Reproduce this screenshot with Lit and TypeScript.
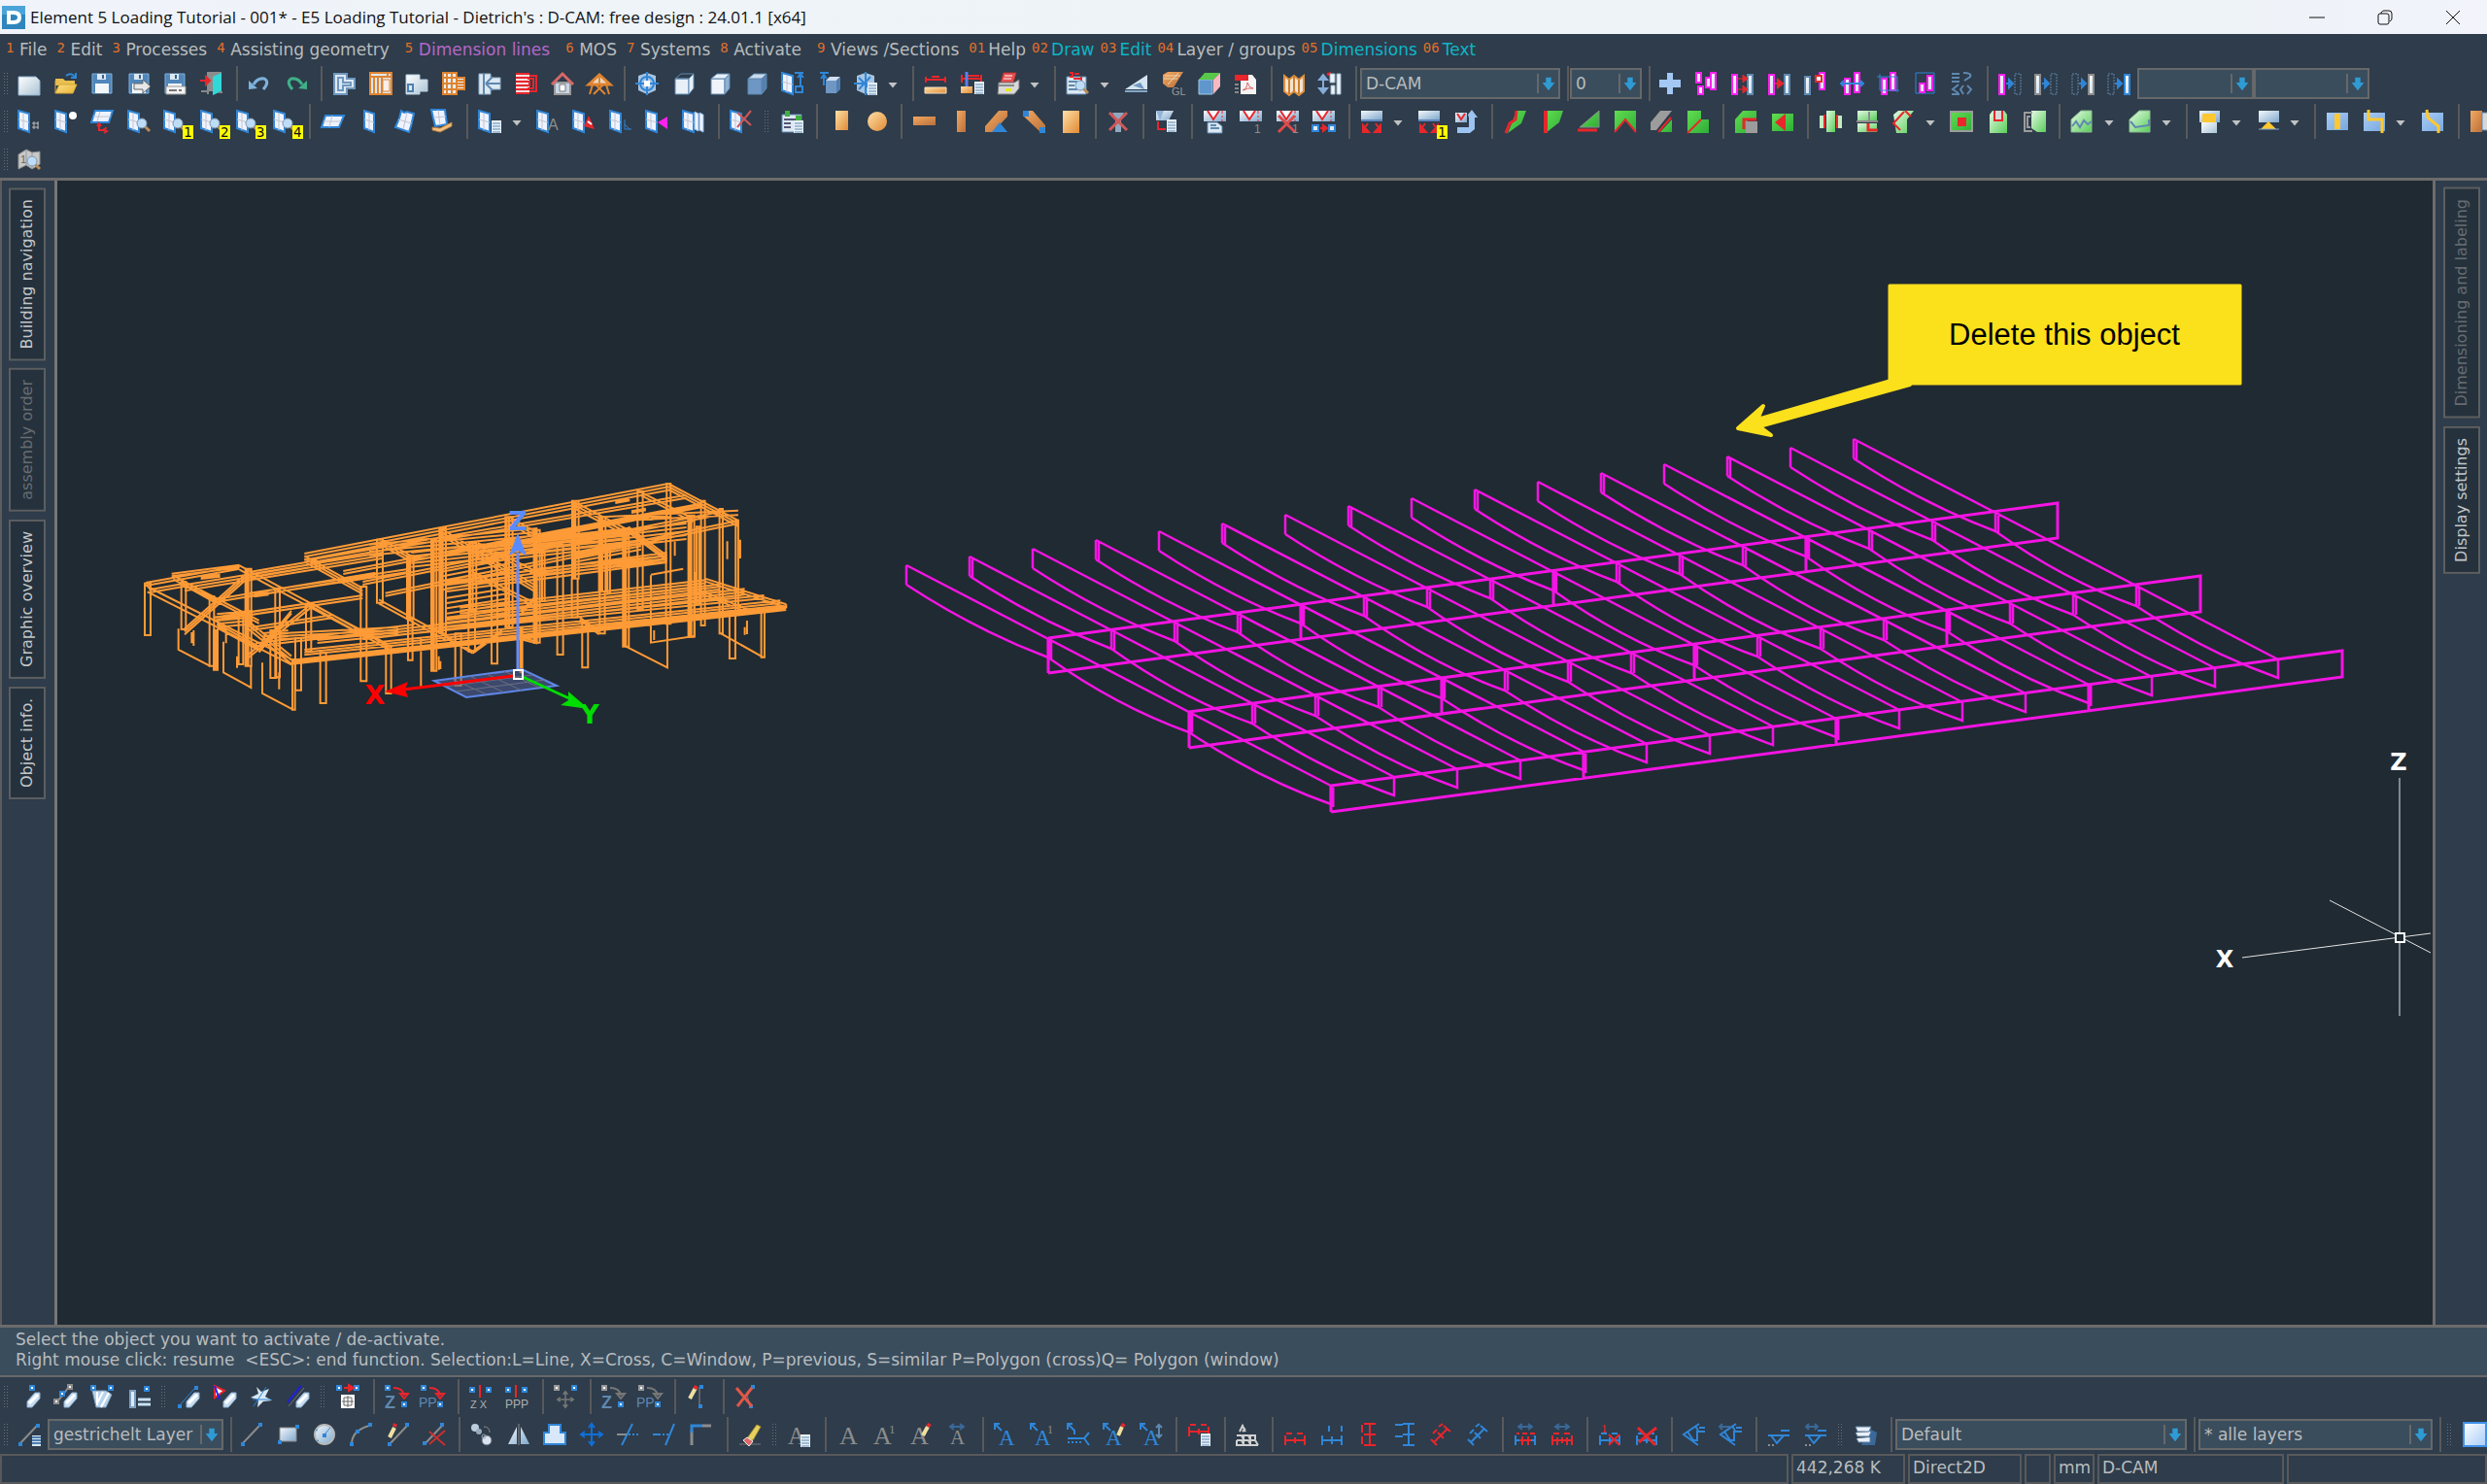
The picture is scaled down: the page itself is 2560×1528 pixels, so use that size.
import { LitElement, html, svg, css, nothing } from "lit";
import { customElement } from "lit/decorators.js";

const B = "#2f86d8", R = "#e8262c", G = "#8c8c8c", O = "#e08430", M = "#ff20f0", W = "#eef3ff", S = "#5f88b0", L = "#dce8f2";
const SHEET = "url(#g-sheet)", ORANGE = "url(#g-orange)", BROWN = "url(#g-brown)", GREEN = "url(#g-green)", MINT = "url(#g-mint)", STEEL = "url(#g-steel)", SKY = "url(#g-sky)";

const p = (d: string, fill = "none", stroke = "none", w = 2) =>
  svg`<path d=${d} fill=${fill} stroke=${stroke} stroke-width=${w}></path>`;
const t = (s: string, x: number, y: number, size: number, fill: string, family = "Liberation Serif", weight = 400) =>
  svg`<text x=${x} y=${y} font-size=${size} fill=${fill} font-family=${family} font-weight=${weight}>${s}</text>`;
const box = (x: number, y: number, w: number, h: number, fill: string, stroke = "none", sw = 2) =>
  p(`M${x} ${y}h${w}v${h}h${-w}z`, fill, stroke, sw);

/* shared motifs */
const sheet = () => [p("M1 1l11 3v19l-11-4z", W, B, 2), p("M6 3v18M1 10l11 3", "none", "#c4c4cc", 1)];
const badge = (n: string) => [box(20, 16, 11, 14, "#ffff00"), t(n, 21, 28, 14, "#111", "DejaVu Sans Mono")];
const lens = () => [p("M18 17l5 5", "none", "#b98c5a", 3), svg`<circle cx="15" cy="14" r="5" fill="#bcdcf8" stroke="#7f97ab"></circle>`];
const list = (x = 14, y = 11) => [box(x, y, 10, 13, "#e6f0f8"), p(`M${x + 1} ${y + 3}h8M${x + 1} ${y + 6}h8M${x + 1} ${y + 9}h8M${x + 1} ${y + 12}h8`, "none", S, 1)];
const disk = () => [p("M2 2h20v20h-20z", "#4f86bb", "#7fb0dc", 1), box(7, 2, 9, 6, L), box(12, 3, 2, 4, "#35618c"), box(5, 12, 14, 10, "#f2f6fa")];
const cube = (front: string, top: string, side: string) => [p("M3 7h14v16h-14z", front, S, 1), p("M3 7l6-5h13l-5 5z", top, S, 1), p("M17 7l5-5v15l-5 6z", side, S, 1)];
const dot = (x: number, y: number, c = B) => box(x - 2, y - 2, 4, 4, "#fff", c, 2);
const node = (x: number, y: number) => box(x - 2, y - 2, 4, 4, B);
const pen = () => [p("M10 23v-6l8-9h5v6l-8 9z", "#c8def2", "#8fafce", 1), p("M12 19l9-9", "none", "#fff", 3)];
const bar = (x: number, y: number, h: number, c: string) => box(x + 1, y + 1, 5, h - 2, "url(#g-bar)", c, 2);
const dashed = (x: number) => svg`<rect x=${x} y="2" width="6" height="21" fill="none" stroke="#5f88b0" stroke-width="1" stroke-dasharray="2 1"></rect>`;
const arrow = (x: number) => p(`M${x} 12h6m-3-4l4 4-4 4z`, B, B, 2);
const vee = (c = R) => [p("M1 1h23v11h-23z", STEEL), p("M5 1l6 9 6-9", "#fff", c, 2), p("M20 1v3M20 6v2M20 10v2", "none", c, 1)];
const cross = (x = 6, y = 6, s = 16, c = "#e04a48") => p(`M${x} ${y}l${s} ${s}M${x + s} ${y}l${-s} ${s}`, "none", c, 3);
const hdim = (c: string, top = 12) => p(`M1 ${top + 6}h22M2 ${top + 1}v10M22 ${top + 1}v10M12 ${top + 3}v6M3 ${top - 1}h6M14 ${top - 1}h6`, "none", c, 2);
const four = (c: string) => p("M12 2v20M2 12h20M9 5l3-4 3 4M9 19l3 4 3-4M5 9l-4 3 4 3M19 9l4 3-4 3", "none", c, 2);
const ruler = (c: string) => p("M17 1L1 12l15 11M13 3l3 5M5 9l6 9h4V8M14 9h9M17 5h6", "none", c, 2);

const ICONS: Record<string, unknown> = {
  "new": p("M1 5h18l4 4v15h-22z", SHEET, "#8fb0cc", 1),
  open: [p("M1 7h8l2 2h10v5h-20z", "#e8bf50"), p("M1 22V9M5 13h18l-4 9h-18z", "url(#g-gold)", "#d6a63a", 1), p("M12 4q5-4 9 1m1-4v5h-5", "none", B, 2)],
  save: disk(),
  saveas: [disk(), p("M7 12h9v-4l8 7-8 7v-4h-9z", "#e8e8e8", "#666", 1)],
  saveprint: [disk(), box(3, 15, 20, 8, "#f4f4f4", "#999", 1), p("M6 19h8M16 19h3", "none", "#777", 2)],
  exit: [box(7, 0, 15, 20, "#8c8c8c"), p("M13 5l9-4v19l-9 4z", "#30d8d8"), p("M0 9h9M6 5l4 4-4 4z", R, R, 2), p("M1 20h7v3M19 21h4", "none", "#888", 2)],
  undo: [p("M6 13q4-7 11-6q6 3-1 11", "none", "#7fb2dc", 3), p("M1 18v-9l9 8z", "#7fb2dc")],
  redo: [p("M18 13q-4-7-11-6q-6 3 1 11", "none", "#3fb088", 3), p("M23 18v-9l-9 8z", "#3fb088")],
  plan: [p("M2 2h13v5h8v10h-8v6h-13z", L, "#6f97bf", 2), p("M6 6h5v5h8v3h-8v5h-5z", "none", "#6f97bf", 2)],
  wall: [box(1, 1, 22, 22, L, O, 2), p("M1 5h22M5 5v18M9 5v18M13 5v18M19 1v4", "none", O, 2), box(14, 8, 7, 12, "#f8f0e8", O, 1)],
  floor: [p("M1 3h14v5h8v12h-8v3h-14z", SHEET, "#b8cfe0", 1), box(3, 13, 5, 7, L, "#4f7fb0", 2)],
  rafter: [p("M1 1h14v22h-14zM15 6h8v12h-8z", "#e8eef4", O, 2), p("M1 6h14M1 12h22M1 18h14M5 1v22M10 1v22M15 9h8M15 15h8", "none", O, 2)],
  slab: [p("M1 2h12v4h10v12h-10v5h-12z", L, "#8fb0cc", 1), p("M6 2v21M8 12h15M8 12l7-7M8 12l7 7", "none", "#5f88b0", 2)],
  brick: [box(1, 1, 14, 22, "#f2dede"), p("M1 2h14M1 6h14M1 10h10M1 14h10M1 18h14M1 22h14M15 4h7v16h-7M13 7h6v10h-6M10 10h5v4h-5", "none", R, 2)],
  house: [p("M4 11h16v12h-16z", "#c8d8e8", "#999", 2), box(9, 13, 6, 7, "#fff", "#777", 1), p("M1 13L12 2l11 11", "none", "#d86868", 3)],
  truss: [p("M1 13L12 3l11 10z", "#e8d8c8", O, 3), p("M12 4v9M5 13l-3 10M19 13l3 10M8 13l10 10M16 13L6 23", "none", O, 2)],
  target: [p("M3 4l9-3 9 3v15l-9 4-9-4z", "#a8c4e0"), svg`<circle cx="12" cy="12" r="7" fill="none" stroke="#2f86d8" stroke-width="2"></circle>`, p("M12 0v24M0 12h24", "none", B, 2), box(9, 9, 6, 6, "#fff")],
  cubea: cube("#e8f0f8", "none", "#e8f0f8"),
  cubeb: cube("#f0f4fa", "#e8f0f8", "#8fb0d4"),
  cubec: cube("#6f97c4", "#c8daec", "#5580b0"),
  sheetup: [sheet(), p("M20 14V3M17 6l3-4 3 4M14 1h9M15 15h7v6h-7z", "none", B, 2)],
  cubeup: [p("M2 1h9M6 14V4M3 7l3-4 3 4", "none", B, 2), box(8, 9, 11, 13, "#6f97c4"), p("M8 9l4-4h11l-4 4z", "#d0e0f0"), p("M19 9l4-4v13l-4 4z", "#4f7fb0")],
  targetdoc: [p("M3 4l9-3 9 3v15l-9 4-9-4z", "#a8c4e0"), p("M12 0v24M0 12h18M5 6l12 12M17 5L5 18", "none", B, 2), list()],
  dim: [p("M1 8h22M2 5v6M22 5v6M8 5h8", "none", R, 2), box(1, 16, 22, 6, ORANGE, "#f4dfc0", 1)],
  dimcross: [p("M1 7h22M2 3v8M22 3v8M8 4h12", "none", R, 2), p("M7 0v22", "none", "#5f80e8", 3), box(1, 15, 12, 7, ORANGE), list(15, 10)],
  printer: [p("M7 1h13l-3 10h-13z", "#e85050", "#b83030", 1), p("M8 4h8M7 7h8", "none", "#fff", 1), p("M2 11h16l5-3v9l-5 6h-17z", "#d8d8d8", "#777", 1), box(9, 17, 6, 3, "#e8e820"), p("M2 14h16", "none", "#888", 2)],
  inspect: [box(1, 5, 20, 18, L, S, 1), p("M4 1h3v4h-3M9 2h5M8 7h8M16 5v4", "none", R, 2), p("M3 10h9M3 14h6M3 18h9", "none", S, 2), lens()],
  tri: [p("M0 18L23 3v15z", "#d4e4f0"), p("M8 14l8-3 4 7z", "#6f97bf"), p("M0 20h23", "none", "#86a8c8", 2)],
  gl: [p("M2 3l5-3h16l-10 16h-6l-5-4z", BROWN), p("M4 4h16M3 7h14M7 13L18 1", "none", "#f0d8b0", 1), t("GL", 11, 24, 11, "#9a9a9a", "Liberation Sans")],
  cubecolor: [p("M1 8h14v15h-14z", "#5f97cc", "#a0c8e8", 1), p("M1 8l6-7h16l-7 7z", "#58c848"), p("M16 8l7-7v14l-7 8z", "#f8b8c0")],
  pdf: [p("M7 3h12l4 5v15h-16z", "#f4f4f4"), box(1, 3, 14, 6, R), p("M9 19q5-2 5-8q2 6 6 6q-6-1-10 2", "none", "#e06060", 1), p("M1 13h4M1 17h4M1 21h4", "none", "#888", 2)],
  map: [p("M2 4l5 4 5-4 5 4 5-4v16l-5 4-5-4-5 4-5-4z", "#f2e4d0", "#e09040", 2), p("M7 8v15M12 4v16M17 8v15", "none", "#d08030", 2)],
  updown: [p("M5 5v15M1 8l4-5 4 5zM1 17l4 5 4-5z", "#86acd8", "#86acd8", 2), p("M9 3l4-2", "none", R, 3), p("M12 2h5v9h-5zM19 2h4v21h-4zM13 14h4v9h-4z", "#eef4fa", "#9fb4c8", 1)],
  plus: p("M9 1h6v7h8v8h-8v7h-6v-7h-8v-8h8z", "#a4c8f4"),
  p1: [bar(0, 0, 12, M), bar(15, 0, 19, M), bar(10, 5, 12, M), bar(2, 14, 10, M)],
  p2: [bar(0, 2, 22, M), bar(16, 2, 22, S), p("M7 7h5M12 3l5 4-5 4zM7 18h5M12 14l5 4-5 4z", R, R, 1)],
  p3: [bar(0, 2, 22, M), bar(16, 2, 22, S), p("M7 12h5M10 8l5 4-5 4z", R, R, 2)],
  p4: [bar(0, 4, 20, S), bar(15, 0, 19, M), box(12, 4, 6, 6, "#fff", R, 2)],
  p5: [bar(3, 6, 18, M), bar(13, 0, 22, M), p("M0 12h23M3 9l-3 3 3 3M20 9l3 3-3 3", "none", B, 2)],
  p6: [bar(4, 6, 18, M), bar(13, 0, 20, M), p("M3 2v17h20M0 5h21v16", "none", B, 1)],
  p7: [box(2, 1, 19, 21, "none", B, 1), bar(5, 11, 11, M), bar(13, 3, 17, M)],
  sym: p("M2 2h8M2 6h8M2 10h8M14 1q9 0 7 4l-6 4M9 13l-6 5 6 4M14 14l-3 4 3 5M18 14l4 4-4 5M2 23h8", "none", S, 2),
  m1: [bar(0, 2, 22, M), arrow(8), dashed(17)],
  m2: [bar(0, 2, 22, G), arrow(8), dashed(17)],
  m3: [dashed(1), arrow(8), bar(17, 2, 22, G)],
  m4: [dashed(1), arrow(8), bar(17, 2, 22, B)],

  sheetdots: [sheet(), p("M15 14h7M15 18h7M17 12v8M21 12v8", "none", "#b8b8b8", 1)],
  sheetball: [sheet(), svg`<circle cx="19" cy="6" r="4" fill="#fff"></circle>`],
  sheetred: [p("M5 1h18l-4 12h-18z", W, B, 2), p("M10 2l-3 10M3 7h18", "none", "#c4c4cc", 1), p("M9 15v6h7M16 18l-1 4M7 17l2-3 2 3M13 20l4 2-3 2", "none", R, 2)],
  sheetlens: [sheet(), lens()],
  s1: [sheet(), lens(), badge("1")],
  s2: [sheet(), lens(), badge("2")],
  s3: [sheet(), lens(), badge("3")],
  s4: [sheet(), lens(), badge("4")],
  panel1: [p("M5 6h19l-5 12h-18z", W, B, 2), p("M12 6l-3 12M3 12h18", "none", "#c4c4cc", 1)],
  panel2: [p("M7 1l10 3v19l-10-4z", W, B, 2), p("M12 3v18M7 10l10 3", "none", "#c4c4cc", 1)],
  panel3: [p("M8 1l3 2 3-1 7 2-3 13-2 6-14-5 4-9z", W, B, 2), p("M14 3l-4 17M5 10l14 4", "none", "#c4c4cc", 1)],
  panel4: [p("M1 0h14l2 15-12 2z", W, B, 2), p("M8 0l2 16M3 8l13-1", "none", "#c4c4cc", 1), p("M2 18l8 1 12-6v4l-12 6-8-2z", "#f0c080", "#b87838", 1)],
  sheetlist: [sheet(), list()],
  sheeta: [sheet(), t("A", 12, 21, 16, "#8c8c8c", "Liberation Sans")],
  sheetwarn: [sheet(), p("M17 6l-5 11 11 3z", R), p("M16 12l4 3", "none", "#fff", 2)],
  sheetaxis: [sheet(), p("M16 10v10h7M16 15l5 5", "none", B, 1)],
  sheetmag: [sheet(), p("M23 7v13l-10-7z", M)],
  sheetcopy: [sheet(), p("M13 2l4 2v18l-4-2zM18 3l4 2v18l-4-2z", W, "#8fb8e8", 1)],
  sheetdel: [sheet(), p("M8 3l14 13M22 1L8 18", "none", "#d05858", 2)],
  report: [box(2, 5, 20, 18, L, S, 1), box(5, 1, 5, 6, "#40b040"), box(16, 6, 6, 5, "#40b040"), p("M4 10h12M4 14h7M4 18h7", "none", "#557", 2), list()],
  obox: box(8, 1, 13, 20, ORANGE), ocircle: svg`<ellipse cx="13" cy="12" rx="10" ry="10" fill="url(#g-orange)"></ellipse>`,
  ohoriz: box(1, 7, 23, 9, BROWN), overt: box(8, 1, 9, 22, BROWN),
  odiag: [p("M14 1h9v6L8 23h-8v-6z", BROWN), p("M15 13l8 10h-16z", B)],
  odiag2: [p("M5 1h6l13 15v7h-5L1 6z", BROWN), box(1, 1, 6, 6, B), box(18, 18, 6, 6, B)],
  obox2: box(5, 1, 17, 23, ORANGE),
  screwdel: [p("M6 3h12l-3 6v14h-6v-14z", "#8fa8c0"), cross(3, 3, 18, "#d05858")],
  veetree: [p("M2 1h18l-5 10h-13z", STEEL), p("M2 1h8l-4 10", "#8fb4d8"), p("M4 12v8h8", "none", R, 2), list(13, 10)],
  v1: [vee(), p("M5 13h10l5 4v7h-15z", L, S, 1), p("M8 16h6M8 19h9", "none", S, 2)],
  v2: [vee(), t("1", 16, 24, 12, "#8c8c8c", "Liberation Sans")],
  v3: [vee(), cross(3, 6, 17), t("1", 17, 24, 12, "#8c8c8c", "Liberation Sans")],
  v4: [vee(), box(1, 16, 6, 6, L, B, 2), box(18, 16, 6, 6, L, B, 2), p("M9 19h4M12 16l4 3-4 3z", R, R, 2)],
  w1: [box(1, 1, 22, 9, STEEL), p("M1 11h22", "none", "#5f88c0", 2), p("M8 14l-4 6M3 16v7h6zM16 14l4 6M21 16v7h-6z", R, R, 2)],
  w2: [box(1, 1, 22, 9, STEEL), p("M1 11h22", "none", "#5f88c0", 2), p("M8 14l-4 6M3 16v7h6zM16 14l4 6M21 16v7h-6z", R, R, 2), badge("1")],
  w3: [box(1, 3, 12, 10, STEEL), p("M3 4l4 6 4-6", "none", R, 2), p("M14 5l4-5 6 8h-3v12l-5 4h-13v-6h12v-10z", "#9cc4f0")],
  g1: [p("M13 1h10l-5 13-14 10 5-12z", GREEN), p("M13 1l-1 9-6 4-4 10", "none", R, 3)],
  g2: [p("M7 1h16l-4 12-14 11z", GREEN), p("M5 1v23", "none", R, 4)],
  g3: [p("M23 1v17h-20z", GREEN, "#8c8c8c", 1), p("M1 21h20", "none", R, 3)],
  g4: [p("M1 1h22v22l-11-12-11 12z", GREEN), p("M1 23l11-13 11 13", "none", R, 2)],
  g5: [p("M11 1h12l-16 20h-6v-8z", "#9c9c9c"), p("M23 10v13h-12z", GREEN), p("M22 8l-13 15", "none", R, 2)],
  g6: [p("M1 1h14v9h8v14h-22z", GREEN), p("M15 10l-14 14", "none", R, 2)],
  g7: [p("M9 1h14v8h-9v15h-13v-14z", GREEN), p("M10 20v-10h13", "none", R, 3), box(12, 12, 12, 12, "#9c9c9c")],
  g8: [box(1, 4, 22, 18, GREEN), p("M15 4v18l-11-9z", R)],
  h1: [box(8, 1, 9, 22, MINT), p("M1 6h5v13h-5zM19 6h5v13h-5z", "#c4ecc4"), p("M6 5v14M19 5v14", "none", R, 2)],
  h2: [box(2, 1, 20, 10, MINT), box(2, 14, 20, 9, MINT), p("M13 14v7h10", "none", R, 3), p("M1 12h22M14 2v9", "none", "#8c8c8c", 2)],
  h3: [p("M2 5l5-4h16l-7 9v14h-11z", MINT), p("M14 1l6 6M13 2l-11 12 7 7", "none", R, 2)],
  h4: [box(1, 2, 22, 20, GREEN, "#9c9c9c", 2), box(8, 8, 9, 9, R)],
  h5: [p("M4 5l3-4h12l3 4v19h-18z", MINT), p("M9 1v10h8v-10", "#d8d8d8", R, 2)],
  h6: [p("M9 1h15v22h-9l-6-4z", MINT), p("M10 3h-8v19h8M8 7h-3v11h3", "none", "#9c9c9c", 2)],
  k1: [p("M1 10l10-9h11v22h-21z", MINT, "#88b890", 1), p("M2 17l4-5 4 6 4-7 4 4 4-3", "none", S, 2)],
  k2: [p("M1 10l10-9h11v22h-21z", MINT, "#88b890", 1), p("M2 12l5 6 14-2v-6", "none", S, 2)],
  y1: [box(4, 12, 16, 12, SHEET), box(2, 1, 21, 12, STEEL), box(5, 4, 14, 9, "#ffc830")],
  y2: [box(2, 1, 21, 12, STEEL), p("M12 12l8 8h-16z", "#ffc830"), p("M2 20h21", "none", "#7fa8d8", 1)],
  y3: [p("M1 3h22v18h-22z", SKY), box(9, 4, 6, 16, "#ffc830")],
  y4: [box(1, 3, 22, 19, SKY), p("M6 0v10h14v14", "none", "#ffc830", 3)],
  y5: [box(1, 3, 22, 19, SKY), p("M6 0l1 8 11 9v7", "none", "#ffc830", 3)],
  y6: [box(1, 1, 12, 22, BROWN), box(13, 3, 10, 18, "#d8d8d8", S, 1)],
  book: [p("M1 7l8-5 6 3 8-1v13l-8 5-6-4-8 4z", "#c8c8c8", "#8f8f8f", 1), p("M9 2v16M15 5v16", "none", "#999", 1), t("1", 3, 16, 11, "#666", "Liberation Sans"), lens()],

  q1: [pen(), dot(15, 3)], q2: [pen(), p("M3 17l6-7 5-7", "none", G, 2), dot(8, 9), dot(16, 2, G), dot(2, 17, G)],
  q3: [p("M2 6h14l6 4-6 13h-10z", "#b8d4ec", "#7f9fbe", 1), p("M7 7v14M13 7l-6 12M19 8l-8 15", "none", "#fff", 2), dot(3, 3), dot(21, 3)],
  q4: [p("M3 6h5v17h-5z", "#dcebfa", "#7f9fbe", 2), p("M11 15h13M11 20h13", "none", "#c8e0f4", 3), dot(20, 4)],
  q5: [p("M2 22L18 4", "none", B, 1), node(20, 3), node(3, 22), pen()],
  q6: [p("M1 1v12l10-7z", "#fff", R, 2), p("M1 1l5 14", "none", "#2020ff", 2), pen()],
  q7: [p("M7 2l5 5 8-3-4 8 7 4-9 1-6 6 1-8-8-2 8-4z", "#d8e8f4"), p("M4 22L17 2M3 15h19", "none", B, 1)],
  q8: [p("M1 18L15 1", "none", "#2020d8", 2), p("M2 22L18 3", "none", "#777", 1), pen()],
  q9: [dot(3, 3), dot(21, 3), p("M8 3h6M13 0l5 3-5 3z", R, R, 2), box(5, 10, 14, 14, "#fff"), p("M8 13h8v8h-8zM12 11v12M6 17h12", "none", "#666", 1)],
  z1: [dot(3, 3), dot(20, 20), p("M9 3q10 0 11 8M16 9l4 5 4-5z", "none", R, 2), t("Z", 0, 24, 18, S, "Liberation Sans", 700)],
  z2: [dot(3, 3), dot(20, 20), p("M9 3q10 0 11 8M16 9l4 5 4-5z", "none", R, 2), t("PP", -2, 23, 14, S, "Liberation Sans")],
  z3: [dot(3, 5), dot(20, 5), p("M11 0v13", "none", R, 2), t("Z X", 1, 24, 11, "#b0b0b0", "Liberation Sans")],
  z4: [dot(3, 5), dot(20, 5), p("M11 0v13", "none", R, 2), t("PPP", 0, 24, 12, "#b0b0b0", "Liberation Sans")],
  z5: [dot(3, 3, "#999"), dot(21, 3), svg`<g transform="translate(3 6) scale(.75)">${four("#777")}</g>`],
  z6: [dot(3, 3, "#999"), dot(20, 20), p("M9 3q10 0 11 8M16 9l4 5 4-5z", "none", "#777", 2), t("Z", 0, 24, 18, S, "Liberation Sans", 700)],
  z7: [dot(3, 3, "#999"), dot(20, 20), p("M9 3q10 0 11 8M16 9l4 5 4-5z", "none", "#777", 2), t("PP", -2, 23, 14, S, "Liberation Sans")],
  z8: [p("M14 2v19", "none", G, 1), node(16, 2), node(15, 22), p("M4 14L10 3", "none", "#f0e0a0", 4), p("M9 4l2-3", "none", R, 4)],
  z9: [p("M18 4q-9 6 0 18", "none", "#777", 1), node(17, 22), node(19, 2), p("M2 3l16 19M18 3L3 22", "none", "#e05848", 3)],

  ln0: [p("M2 22L20 3", "none", G, 2), node(3, 22), node(21, 3), box(15, 13, 9, 11, "#d8e8f4"), p("M15 15h9M15 18h9M15 21h9", "none", "#4f7fb0", 2)],
  ln1: [p("M2 22L20 3", "none", G, 2), node(3, 22), node(21, 2)],
  ln2: [box(3, 5, 17, 14, STEEL, G, 1), node(21, 4), node(3, 20)],
  ln3: [svg`<circle cx="12" cy="12" r="10" fill="url(#g-steel)" stroke="#b8b8b8" stroke-width="2"></circle>`, p("M12 12l6-7M5 8l-2-1M6 18l-2 1", "none", B, 1), node(12, 13)],
  ln4: [p("M2 22q0-14 18-19", "none", G, 2), node(2, 22), node(8, 9), node(21, 2)],
  ln5: [p("M4 22L22 3", "none", G, 2), node(4, 22), node(22, 2), p("M4 15L9 5", "none", "#f0e0a0", 4), p("M9 4l1-3", "none", R, 4)],
  ln6: [p("M2 22L20 3", "none", G, 2), node(2, 21), node(20, 2), p("M7 9l16 14M23 8L7 22", "none", "#c83030", 2)],
  e1: [svg`<circle cx="5" cy="5" r="4" fill="#bcd"></circle>`, svg`<circle cx="9" cy="9" r="3" fill="#9ab"></circle>`, svg`<circle cx="17" cy="18" r="5" fill="#d8e4f0" stroke="#667"></circle>`, svg`<circle cx="14" cy="14" r="2" fill="none" stroke="#9ab"></circle>`, p("M14 4q6 0 6 6", "none", G, 1)],
  e2: [p("M10 4v18h-9zM14 4v18h9z", STEEL), p("M12 1v22", "none", G, 1)],
  e3: p("M6 2h12v8h5v12h-22v-12h5z", "#d8e8f8", B, 2),
  e4: four("#0f6fd8"),
  e5: [p("M17 1L6 23", "none", B, 2), p("M1 12h10", "none", G, 2), p("M13 12h2M17 12h2M21 12h2", "none", B, 2)],
  e6: [p("M22 1L13 23", "none", B, 2), p("M0 12h8M10 12h2M14 12h2", "none", B, 2)],
  e7: [p("M3 23V8", "none", G, 3), p("M3 10V3h11", "none", B, 3), p("M14 3h9", "none", G, 3)],
  e8: [p("M1 22h22", "none", "#777", 1), p("M9 16L19 2l4 2-8 14z", "#e8d060", "#a89030", 1), p("M5 18l4-3 6 4-4 5z", "#e06868", "#eee", 1)],
  a0: [t("A", 0, 22, 25, G), list(13, 12)],
  a1: t("A", 3, 22, 26, G), a2: [t("A", 1, 22, 26, G), t("1", 17, 11, 13, G)],
  a3: [t("A", 1, 22, 26, G), p("M14 13l5-9", "none", "#f0e0a0", 4), p("M19 4l2-3", "none", R, 4)],
  a4: [t("A", 5, 22, 21, G), p("M6 4h12M9 1l-4 3 4 3M15 1l4 3-4 3", "none", "#3a6898", 2)],
  b1: [t("A", 5, 23, 23, B), p("M1 7V1h5M1 1l7 7", "none", B, 2)],
  b2: [t("A", 5, 23, 23, B), p("M1 7V1h5M1 1l7 7", "none", B, 2), t("1", 18, 11, 12, G)],
  b3: [p("M1 7V1h5M1 1l7 7v4M1 16h18M18 16l5-6M18 16l5 7", "none", B, 2), p("M1 20h2M5 20h2M9 20h2M13 20h2", "none", B, 2)],
  b4: [t("A", 3, 23, 23, B), p("M1 7V1h5M1 1l7 7", "none", B, 2), p("M16 13l4-9", "none", "#f0e0a0", 4), p("M20 4l2-3", "none", R, 4)],
  b5: [t("A", 4, 23, 23, B), p("M1 7V1h5M1 1l7 7", "none", B, 2), p("M20 3v11M17 5l3-3 3 3M17 12l3 3 3-3", "none", S, 2)],
  c1: [hdim(R, 3), list()],
  c2: p("M4 9l3-6 3 6M7 9l3-3M1 13h5l2 4v-4h5l2 4v-4h5v4M1 18h5l2 4v-4h5l2 4v-4h5l3 5M1 18v5h22", "none", "#d0d0d0", 2),
  d1: hdim(R, 12), d2: [p("M1 18h22M2 13v10M22 13v10M12 14v8M9 3v6M22 3v6", "none", B, 2)],
  d3: p("M8 1h12M8 12h12M8 23h12M14 1v22M6 2v8M6 14v8", "none", R, 2),
  d4: p("M10 1h12M10 12h12M10 23h12M16 1v22M2 2h8M2 14h8", "none", B, 2),
  d5: p("M5 20L19 6M2 17l6 6M9 10l6 6M15 3l7 6M4 11l4-4M10 4l4-3", "none", R, 2),
  d6: p("M5 20L19 6M2 17l6 6M9 10l6 6M15 3l7 6M4 11l4-4M10 4l4-3", "none", B, 2),
  f1: [p("M1 18h22M2 13v10M22 13v10", "none", B, 2), p("M9 14v9M15 14v9M6 18h12M3 11h3M9 11h5M17 11h5", "none", R, 2), p("M6 4h12M9 1l-4 3 4 3M15 1l4 3-4 3", "none", "#3a6898", 2)],
  f2: [hdim(R, 12), p("M7 15v8M17 15v8", "none", R, 2), p("M6 4h12M9 1l-4 3 4 3M15 1l4 3-4 3", "none", "#3a6898", 2)],
  f3: [hdim(B, 12), t("1", 3, 10, 13, R), p("M11 12l11 11M22 12L11 23", "none", R, 2)],
  f4: [hdim(B, 12), p("M3 5l18 18M22 5L4 20", "none", R, 3)],
  r1: ruler(B), r2: [ruler(B), p("M0 4h12M3 1L0 4l3 3", "none", "#3a6898", 2)],
  u1: [p("M1 13h22M14 8h9M4 13l6 8 7-8", "none", B, 2), p("M1 23h2M5 23h2", "none", G, 2)],
  u2: [p("M1 13h22M14 8h9M4 13l6 8 7-8", "none", B, 2), p("M2 4h12M5 1L2 4l3 3M11 1l3 3-3 3", "none", "#3a6898", 2), p("M1 23h2M5 23h2", "none", G, 2)],
  layers: [p("M16 6l8 4-2 13h-14z", "#3a6898"), p("M2 4h16l-2 5h-12zM2 10l2 4h12l2-5M3 16l2 4h12v-5", "#e8f0f8", "#5f7f9f", 1)],
  swatch: box(1, 0, 23, 24, "url(#g-swatch)", "#3f90e8", 2),
};

type Item = string | { combo: string; w: number; label: string; space?: number };
const words = (s: string): Item[] => s.split(" ");

/* Tokens: "|" separator, "/" tight separator, ":" grip, "v" drop-down marker, "_" thin spacer; anything else names an icon. */
const ROW1: Item[] = [...words("^ new open save saveas saveprint exit | undo redo | plan wall floor rafter slab brick house truss | target cubea cubeb cubec sheetup cubeup targetdoc v | dim dimcross printer v | inspect v _ tri gl cubecolor pdf | map updown |"),
  { combo: "D-CAM", w: 206, label: "Work mode" }, "/", { combo: "0", w: 74, label: "Level" }, "/",
  ...words("plus p1 p2 p3 p4 p5 p6 p7 sym | m1 m2 m3 m4"),
  { combo: "", w: 120, label: "Filter group" }, { combo: "", w: 119, label: "Filter value" }];
const ROW2 = words("^ sheetdots sheetball sheetred sheetlens s1 s2 s3 s4 | panel1 panel2 panel3 panel4 | sheetlist v sheeta sheetwarn sheetaxis sheetmag sheetcopy | sheetdel : report | obox ocircle | ohoriz overt odiag odiag2 obox2 | screwdel | veetree | v1 v2 v3 v4 | w1 v w2 w3 _ | _ g1 g2 g3 g4 g5 g6 | g7 g8 | h1 h2 h3 v h4 h5 h6 | k1 v k2 v | y1 v _ y2 v | y3 y4 v _ y5 | y6");
const ROW3 = words("^ book");
const ROWA = words("^ q1 q2 q3 q4 : q5 q6 q7 q8 : q9 | z1 z2 | z3 z4 | z5 | z6 z7 | z8 | z9");
const ROWB: Item[] = ["^", "ln0", { combo: "gestrichelt Layer", w: 181, label: "Line layer", space: 1 }, "/",
  ...words("ln1 ln2 ln3 ln4 ln5 ln6 | e1 e2 e3 e4 e5 e6 e7 _ | e8 : a0 | a1 a2 a3 a4 | b1 b2 b3 b4 b5 | c1 | c2 | d1 d2 d3 d4 d5 d6 | f1 f2 | f3 f4 | r1 r2 | u1 u2 : layers |"),
  { combo: "Default", w: 300, label: "Layer set" }, "|", { combo: "* alle layers", w: 241, label: "Visible layers" }, "/", ":", "swatch"];

const UNITS: Record<string, number> = { "^": 11, "|": 12, "/": 10, ":": 14, v: 22, _: 1 };

const MENU: [string, string, string?, boolean?][] = [
  ["1", "File"], ["2", "Edit"], ["3", "Processes"], ["4", "Assisting geometry"], ["5", "Dimension lines", "violet", true],
  ["6", "MOS", "", true], ["7", "Systems"], ["8", "Activate"], ["9", "Views /Sections", "", true], ["01", "Help"], ["02", "Draw", "cyan"],
  ["03", "Edit", "cyan"], ["04", "Layer / groups"], ["05", "Dimensions", "cyan"], ["06", "Text", "cyan"],
];

/* ---- timber frame (grid units, three per pixel) ---- */
const run = (x1: number, y1: number, x2: number, y2: number, n = 2, gap = 9) =>
  Array.from({ length: n }, (_, i) => `M${x1} ${y1 + i * gap}L${x2} ${y2 + i * gap}`).join("");
const POSTS: [number, number, number, number, number?][] = [
  [36, 335, 495, 18], [147, 330, 477, 14], [234, 375, 590, 14], [246, 480, 602, 12, 1], [347, 290, 590, 18, 1], [324, 430, 585, 14], [437, 350, 625, 14],
  [424, 480, 627, 18], [501, 505, 665, 18], [487, 570, 725, 8], [533, 400, 545, 16], [578, 550, 705, 18], [703, 345, 637, 18], [780, 530, 675, 16],
  [753, 200, 395, 18], [847, 250, 445, 20, 1], [847, 445, 572, 14], [920, 200, 605, 16, 1], [947, 165, 490, 20, 1], [995, 490, 650, 18], [1040, 210, 420, 22, 1],
  [1037, 420, 545, 20], [1107, 250, 583, 18], [1152, 130, 470, 22, 1], [1190, 470, 610, 6], [1238, 170, 518, 18, 1], [1258, 240, 390, 8], [1310, 215, 555, 18],
  [1357, 80, 320, 20, 1], [1355, 320, 440, 18], [1387, 455, 595, 18], [1440, 130, 360, 20, 1], [1440, 360, 490, 16], [1460, 220, 365, 8], [1513, 165, 530, 18, 1],
  [1557, 50, 415, 16, 0], [1645, 27, 130, 12], [1644, 130, 460, 14], [1715, 125, 500, 18, 1], [1735, 160, 400, 8], [1751, 80, 465, 12], [1807, 105, 490, 10],
  [1856, 140, 425, 8], [1842, 430, 567, 18], [1936, 415, 563, 10],
];
const postPath = POSTS.map(([x, a, b, w, solid]) => {
  const l = x - w / 2, r = x + w / 2;
  return `M${l} ${a}V${b}H${r}V${a}z` + (solid ? `M${x} ${a}V${b}M${l + 4} ${a}V${b}` : "");
}).join("");
const framePath = [
  run(520, 243, 1644, 27, 3, 10), run(540, 262, 1700, 62, 2), run(640, 297, 1750, 88), run(700, 330, 1800, 115), run(770, 365, 1858, 142, 2),
  run(30, 333, 320, 281, 2), run(110, 305, 320, 278, 2, 8), run(150, 340, 760, 240, 3), run(40, 355, 150, 335), run(240, 385, 740, 302), run(350, 300, 560, 264, 3),
  run(350, 365, 845, 290), run(240, 440, 700, 372, 2), run(360, 470, 610, 432, 2), run(440, 490, 810, 470, 3), run(370, 520, 860, 462, 2),
  run(35, 345, 480, 570, 2, 16), run(150, 330, 380, 450, 2), run(320, 280, 790, 530, 2, 13), run(540, 395, 780, 530, 2, 10), run(115, 310, 240, 380, 2, 12),
  run(520, 250, 700, 350, 3, 9), run(760, 200, 850, 250, 3, 9), run(750, 385, 960, 500, 2, 12), run(940, 165, 1240, 345, 3, 10), run(1152, 130, 1240, 180, 3, 10),
  run(1357, 85, 1520, 170, 3, 10), run(1557, 52, 1720, 135, 2, 10), run(1644, 27, 1858, 140, 3, 9),
  run(480, 572, 2008, 405, 3, 6), run(520, 540, 1990, 388, 3, 8), run(560, 510, 1940, 372, 2), run(700, 490, 1880, 352, 3, 9), run(960, 440, 1800, 338, 3, 8), run(1000, 410, 1760, 325, 3, 9),
  run(720, 215, 1240, 165, 4, 11), run(850, 240, 1520, 165, 5, 11), run(1040, 225, 1700, 150, 5, 12), run(960, 330, 1640, 240, 4, 10), run(1240, 290, 1640, 250, 3, 9),
  run(940, 300, 1150, 260, 5, 14), run(960, 380, 1150, 350, 6, 16), run(1350, 240, 1560, 200, 4, 10), run(1440, 130, 1860, 110, 2, 14), run(1240, 190, 1750, 90, 2),
  run(1757, 320, 2008, 400, 2, 9), run(1700, 340, 1900, 420, 2, 9), run(1520, 160, 1640, 250, 3, 8), run(1040, 300, 1240, 400, 2, 10), run(1055, 210, 1240, 300, 2, 10),
  run(150, 475, 340, 305, 3, 9), run(340, 560, 540, 400, 2, 10), run(380, 540, 480, 420, 2, 8), run(345, 450, 480, 560, 3, 12), run(250, 460, 380, 530, 2, 12),
  run(250, 430, 360, 420, 5, 10), run(390, 490, 470, 480, 4, 9), run(1040, 545, 1130, 480, 2, 6), run(960, 500, 1040, 545, 2, 6), run(1180, 500, 1240, 515, 2, 6), run(1370, 440, 1430, 485, 2, 8),
  run(1190, 420, 1240, 370, 2, 8), run(1480, 82, 1525, 74, 2, 5), run(1530, 112, 1575, 104, 2, 5), run(1590, 132, 1640, 124, 2, 6), run(200, 315, 260, 308, 2, 6), run(365, 370, 410, 364, 2, 6),
  "M131 475V540L228 590M270 515V610L355 657V590M390 580V675L485 725M1513 530L1641 595V460M1590 310V518L1725 498V300M1590 308L1690 290M1807 490L1936 563M880 505V660",
  "M178 480v48M172 486v34M312 560v36M935 560v42M940 575v25M442 610v52M1600 480v30M1664 200v50M1826 205v55M1866 200v58M1887 450v42M1880 470v24M250 462l28 18v40M2008 400v12",
].join("");

/* ---- roof joists (pixels) ---- */
const COUNT = 16, STEP: [number, number] = [65, -8.65];
const at = (x: number, y: number, i: number): [number, number] => [Math.round(x + STEP[0] * i), Math.round(y + STEP[1] * i)];
const joistPath = Array.from({ length: COUNT }, (_, i) => {
  const [x, y] = at(933, 583, i);
  const caps = [[0, 0], [146, 75], [291, 151]].map(([dx, dy], k) => `M${x + dx} ${y + dy}v20` + ((i + k) % 2 || k ? `M${x + dx + 3} ${y + dy + 1}v20` : "")).join("");
  return `M${x} ${y}l437 227M${x} ${y + 20}q70 46 146 75q70 50 145 77q72 48 146 74v-20` + caps;
}).join("");
const BEAMS: [number, number, number, number, number][] = [[1079, 658, 2118, 519, 36], [1224, 734, 2265, 594, 37], [1370, 810, 2411, 671, 27]];
const beamPath = BEAMS.map(([x1, y1, x2, y2, h]) => {
  const joints = [0, 4, 8, 12].map((i) => { const [x, y] = at(x1, y1, i); return `M${x} ${y}v${h}M${x + 2} ${y}v22`; }).join("");
  return `M${x1} ${y1}L${x2} ${y2}v${h}L${x1} ${y1 + h}` + joints;
}).join("");

@customElement("app-root")
export class AppRoot extends LitElement {
  static styles = css`
    :host { display: flex; flex-direction: column; height: 100vh; overflow: hidden; background: #2e3c4b; color: #b9bcbe; font: 17px/20px "DejaVu Sans", Verdana, sans-serif; }
    * { box-sizing: border-box; }
    .defs { position: absolute; width: 0; height: 0; }
    button, select { font: inherit; color: inherit; background: none; border: 0; padding: 0; margin: 0; }
    .title { display: flex; align-items: center; flex: none; height: 35px; padding-left: 2px; background: linear-gradient(90deg, #f1f3fb, #eef4f8 20%, #eef3f8 90%, #f2f3fb); color: #111; }
    .title h1 { margin: 0 auto 0 5px; font: 17px/24px "Open Sans", "Noto Sans", sans-serif; }
    .title button { width: 70px; height: 34px; display: grid; place-items: center; }
    .menu { display: flex; align-items: center; flex: none; height: 31px; padding-left: 6px; }
    .menu a { display: flex; color: inherit; text-decoration: none; margin-right: 10px; white-space: nowrap; }
    .menu a.pair { margin-right: 6px; }
    .menu a.wide { margin-left: 6px; }
    .num { width: 14px; font: 14px/16px "DejaVu Sans Mono", monospace; color: #e0702c; }
    .pair .num { width: 20px; }
    .violet { color: #b467c8; }
    .cyan { color: #0fb4c6; }
    .bar { display: flex; align-items: center; height: 39px; overflow: hidden; flex: none; }
    .tool { height: 36px; display: grid; place-items: center; flex: none; }
    .icon { display: block; width: 24px; height: 24px; overflow: visible; }
    .sep { flex: none; height: 36px; border-left: 2px solid #59595b; margin-left: 7px; }
    .cell { flex: none; display: flex; }
    .grip { width: 6px; height: 24px; margin: auto; background: radial-gradient(#6b6f73 1px, transparent 1px) 0 0 / 3px 3px; }
    .chev { width: 10px; height: 6px; margin: 4px 0 0 4px; background: #c0c2c4; clip-path: polygon(0 0, 100% 0, 50% 100%); }
    .combo { display: flex; align-items: center; flex: none; height: 32px; border: 2px solid #66686a; background: #3a4d5d; }
    .combo select { appearance: none; flex: 1; min-width: 0; height: 28px; padding-left: 4px; outline: 0; }
    .combo svg { width: 22px; height: 20px; border-left: 2px solid #66686a; flex: none; }
    .main { flex: 1; min-height: 0; display: flex; border-top: 3px solid #6c6c6c; border-bottom: 3px solid #6c6c6c; }
    .side { width: 56px; border-left: 2px solid #5c5c5e; padding: 7px 0 0 7px; display: flex; flex-direction: column; align-items: flex-start; gap: 8px; flex: none; }
    .side.right { width: 53px; border-left: 0; padding-left: 8px; }
    .side button { writing-mode: vertical-rl; transform: rotate(180deg); width: 38px; padding: 10px 0; border: 2px solid #5c5e60; background: #25323d; color: #c4c6c8; font-size: 16px; line-height: 34px; white-space: nowrap; }
    .side .off { color: #686c70; }
    .view { flex: 1; min-width: 0; border-left: 3px solid #777; border-right: 3px solid #6c6c6c; background: #202a32; }
    .view svg { display: block; width: 100%; height: 100%; }
    .prompt { padding: 2px 16px; height: 51px; background: #3a4d5d; border-bottom: 2px solid #66686a; font-size: 17px; line-height: 21px; white-space: pre; flex: none; }
    .prompt p { margin: 0; }
    .status { display: flex; gap: 3px; margin-top: 1px; height: 31px; flex: none; }
    .status span { border: 2px solid #59595b; padding: 0 0 0 3px; line-height: 25px; white-space: nowrap; overflow: hidden; }
    .grow { flex: 1; } .w1 { width: 117px; } .w2 { width: 117px; } .w3 { width: 27px; } .w4 { width: 42px; } .w5 { width: 192px; } .w6 { width: 206px; }
  `;

  private bar(items: Item[], name: string) {
    let pos = 0;
    return html`<div class="bar" role="toolbar" aria-label=${name}>${items.map((it) => {
      if (typeof it !== "string") {
        const start = Math.round(pos) + (it.space ?? 0);
        pos = start + it.w;
        return html`<label class="combo" style="width:${it.w}px"><select aria-label=${it.label}><option>${it.combo}</option></select>
          <svg viewBox="0 0 22 20" aria-hidden="true"><path d="M8 3h6v6h4l-7 9-7-9h4z" fill="#2f9bd4"></path></svg></label>`;
      }
      const start = Math.round(pos);
      pos += UNITS[it] ?? 37.5;
      const w = Math.round(pos) - start;
      if (it === "|" || it === "/") return html`<div class="sep" style="width:${w - 7}px"></div>`;
      if (it === "^" || it === ":") return html`<div class="cell" style="width:${w}px"><div class="grip"></div></div>`;
      if (it === "v") return html`<div class="cell" style="width:${w}px"><div class="chev"></div></div>`;
      if (it === "_") return html`<div class="cell" style="width:${w}px"></div>`;
      return html`<button class="tool" style="width:${w}px" aria-label=${it}><svg class="icon" viewBox="0 0 24 24" aria-hidden="true">${ICONS[it] ?? nothing}</svg></button>`;
    })}</div>`;
  }

  private scene() {
    return html`<svg viewBox="59 187 2445 1178" aria-label="Model view">
      <g transform="translate(140 490) scale(.3333)" fill="none" stroke="#ff9b36" stroke-width="6">
        <path d=${framePath}></path><path d=${postPath}></path>
      </g>
      <g fill="none" stroke="#f414e4" stroke-width="2.5"><path d=${joistPath}></path></g>
      <g fill="none" stroke="#f414e4" stroke-width="3"><path d=${beamPath}></path></g>
      <path d="M447 702l90-12 36 17-93 12z" fill="#5868a8" fill-opacity=".5" stroke="#5f86e8" stroke-width="2"></path>
      <path d="M465 700l36 16M483 697l36 17M501 695l36 17M519 692l36 17M458 708l90-12M469 713l92-12" stroke="#6a6f80" stroke-width="1"></path>
      <g stroke-width="3">
        <path d="M533 690V570" stroke="#6a8cf4"></path><path d="M533 550l9 23-9-5-9 5z" fill="#5a8cff"></path>
        <path d="M528 697L415 711" stroke="#f00"></path><path d="M396 713l24-10-3 8 3 8z" fill="#f00"></path>
        <path d="M538 698L590 722" stroke="#0d0"></path><path d="M606 731l-29-4 8-5 0-9z" fill="#0d0"></path>
      </g>
      <rect x="529" y="691" width="9" height="9" fill="none" stroke="#fff" stroke-width="2"></rect>
      <g font-family="DejaVu Sans" font-weight="700" font-size="27" text-anchor="middle">
        <text x="533" y="547" fill="#5a8cff">Z</text><text x="386" y="726" fill="#f00">X</text><text x="607" y="746" fill="#0d0">Y</text>
        <text x="2469" y="794" fill="#fff" font-size="24">Z</text><text x="2290" y="997" fill="#fff" font-size="24">X</text>
      </g>
      <path d="M2470 802V1047M2308 987L2502 962M2398 928L2502 982" stroke="#e4e4e4" fill="none" stroke-width="1"></path>
      <rect x="2466" y="962" width="9" height="9" fill="#202a32" stroke="#fff" stroke-width="2"></rect>
      <g fill="#fbe01c" stroke="#fbe01c" stroke-width="3" stroke-linejoin="round">
        <path d="M1950 392L1809 433L1815 419L1789 442L1823 449L1811 440L1966 397z" stroke-width="4"></path>
        <rect x="1945" y="295" width="361" height="101"></rect>
      </g>
      <text x="2125" y="356" font-family="Liberation Sans" font-size="31" text-anchor="middle" fill="#000">Delete this object</text>
    </svg>`;
  }

  render() {
    const grad = (id: string, a: string, b: string) => svg`<linearGradient id=${id} x1="0" y1="0" x2="1" y2="1"><stop offset="0" stop-color=${a}></stop><stop offset="1" stop-color=${b}></stop></linearGradient>`;
    return html`
      <svg class="defs" aria-hidden="true"><defs>
        ${grad("g-sheet", "#ffffff", "#a9c3d4")}${grad("g-orange", "#ffe0a8", "#e08a34")}${grad("g-brown", "#f4a860", "#b8703c")}${grad("g-green", "#62dc50", "#2fae38")}
        ${grad("g-mint", "#e4fae4", "#58cc58")}${grad("g-steel", "#f4f8fc", "#7fa8cc")}${grad("g-sky", "#a8ccf4", "#78a8e0")}${grad("g-gold", "#ffe890", "#e8b438")}
        ${grad("g-bar", "#ffffff", "#c8dcec")}${grad("g-swatch", "#ffffff", "#a8ccf8")}
      </defs></svg>
      <header class="title">
        <svg width="24" height="24" viewBox="0 0 24 24" aria-hidden="true"><rect width="24" height="24" fill="#2f86bc"></rect><rect width="24" height="9" fill="#4aa4d8"></rect><path d="M7 7h5q6 0 6 5t-6 5h-5z" fill="none" stroke="#fff" stroke-width="4"></path></svg>
        <h1>Element 5 Loading Tutorial - 001* - E5 Loading Tutorial - Dietrich's : D-CAM: free design : 24.01.1 [x64]</h1>
        <button aria-label="Minimize"><svg width="16" height="16"><path d="M0 8h16" stroke="#111" stroke-width="1"></path></svg></button>
        <button aria-label="Restore"><svg width="16" height="16" fill="none" stroke="#111" stroke-width="1"><rect x="1" y="4" width="11" height="11" rx="2"></rect><path d="M4 4V3q1-2 3-2h5q3 0 3 3v5q0 2-2 3"></path></svg></button>
        <button aria-label="Close"><svg width="16" height="16"><path d="M1 1l14 14M15 1L1 15" stroke="#111" stroke-width="1"></path></svg></button>
      </header>
      <nav class="menu">${MENU.map(([n, label, tone, wide]) => html`<a href="#" class="${n.length > 1 ? "pair" : ""} ${wide ? "wide" : ""}"><span class="num">${n}</span><span class=${tone ?? ""}>${label}</span></a>`)}</nav>
      ${this.bar(ROW1, "Standard")}${this.bar(ROW2, "Assembly")}${this.bar(ROW3, "Planning")}
      <div class="main">
        <aside class="side"><button>Building navigation</button><button class="off">assembly order</button><button>Graphic overview</button><button>Object info.</button></aside>
        <div class="view">${this.scene()}</div>
        <aside class="side right"><button class="off">Dimensioning and labeling</button><button>Display settings</button></aside>
      </div>
      <div class="prompt"><p>Select the object you want to activate / de-activate.</p><p>Right mouse click: resume  &lt;ESC&gt;: end function. Selection:L=Line, X=Cross, C=Window, P=previous, S=similar P=Polygon (cross)Q= Polygon (window)</p></div>
      ${this.bar(ROWA, "Snap")}${this.bar(ROWB, "Drawing")}
      <footer class="status"><span class="grow"></span><span class="w1">442,268 K</span><span class="w2">Direct2D</span><span class="w3"></span><span class="w4">mm</span><span class="w5">D-CAM</span><span class="w6"></span></footer>
    `;
  }
}
